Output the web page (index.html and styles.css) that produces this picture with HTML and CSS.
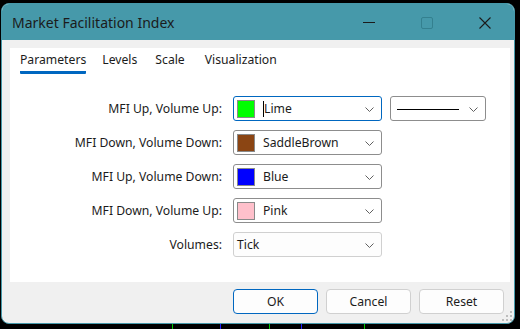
FILE: index.html
```html
<!DOCTYPE html>
<html>
<head>
<meta charset="utf-8">
<link rel="stylesheet" href="styles.css">
</head>
<body>
<div class="window">
  <div class="titlebar">
    <span class="title">Market Facilitation Index</span>
    <div class="controls">
      <div class="ctl"><svg width="12" height="12" viewBox="0 0 12 12"><line x1="0" y1="5.5" x2="12" y2="5.5" stroke="#1b1b1b" stroke-width="1"/></svg></div>
      <div class="ctl"><svg width="12" height="12" viewBox="0 0 12 12"><rect x="0.5" y="0.5" width="11" height="11" rx="1.5" fill="none" stroke="#34808f" stroke-width="1"/></svg></div>
      <div class="ctl"><svg width="12" height="12" viewBox="0 0 12 12"><path d="M0.5 0.5 L11.5 11.5 M11.5 0.5 L0.5 11.5" stroke="#1b1b1b" stroke-width="1.1" fill="none"/></svg></div>
    </div>
  </div>
  <div class="content">
    <div class="panel">
      <div class="tabs">
        <span class="tab active">Parameters</span>
        <span class="tab">Levels</span>
        <span class="tab">Scale</span>
        <span class="tab">Visualization</span>
      </div>
      <div class="form">
        <div class="row">
          <span class="label">MFI Up, Volume Up:</span>
          <div class="combo focused">
            <span class="swatch" style="background:#00ff00"></span>
            <span class="caret"></span><span class="value">Lime</span>
            <svg class="chev" width="9" height="5" viewBox="0 0 9 5"><path d="M0.5 0.5 L4.5 4.5 L8.5 0.5" fill="none" stroke="#606060" stroke-width="1"/></svg>
          </div>
          <div class="combo line-combo">
            <span class="line-sample"></span>
            <svg class="chev" width="9" height="5" viewBox="0 0 9 5"><path d="M0.5 0.5 L4.5 4.5 L8.5 0.5" fill="none" stroke="#606060" stroke-width="1"/></svg>
          </div>
        </div>
        <div class="row">
          <span class="label">MFI Down, Volume Down:</span>
          <div class="combo">
            <span class="swatch" style="background:#8b4513"></span>
            <span class="value">SaddleBrown</span>
            <svg class="chev" width="9" height="5" viewBox="0 0 9 5"><path d="M0.5 0.5 L4.5 4.5 L8.5 0.5" fill="none" stroke="#606060" stroke-width="1"/></svg>
          </div>
        </div>
        <div class="row">
          <span class="label">MFI Up, Volume Down:</span>
          <div class="combo">
            <span class="swatch" style="background:#0000ff"></span>
            <span class="value">Blue</span>
            <svg class="chev" width="9" height="5" viewBox="0 0 9 5"><path d="M0.5 0.5 L4.5 4.5 L8.5 0.5" fill="none" stroke="#606060" stroke-width="1"/></svg>
          </div>
        </div>
        <div class="row">
          <span class="label">MFI Down, Volume Up:</span>
          <div class="combo">
            <span class="swatch" style="background:#ffc0cb"></span>
            <span class="value">Pink</span>
            <svg class="chev" width="9" height="5" viewBox="0 0 9 5"><path d="M0.5 0.5 L4.5 4.5 L8.5 0.5" fill="none" stroke="#606060" stroke-width="1"/></svg>
          </div>
        </div>
        <div class="row">
          <span class="label">Volumes:</span>
          <div class="combo plain">
            <span class="value">Tick</span>
            <svg class="chev" width="9" height="5" viewBox="0 0 9 5"><path d="M0.5 0.5 L4.5 4.5 L8.5 0.5" fill="none" stroke="#606060" stroke-width="1"/></svg>
          </div>
        </div>
      </div>
    </div>
    <div class="buttons">
      <button class="btn default">OK</button>
      <button class="btn">Cancel</button>
      <button class="btn">Reset</button>
    </div>
    <svg class="grip" width="11" height="11" viewBox="0 0 11 11">
      <rect x="8" y="0" width="2" height="2" fill="#bdbdbd"/>
      <rect x="4" y="4" width="2" height="2" fill="#bdbdbd"/>
      <rect x="8" y="4" width="2" height="2" fill="#bdbdbd"/>
      <rect x="0" y="8" width="2" height="2" fill="#bdbdbd"/>
      <rect x="4" y="8" width="2" height="2" fill="#bdbdbd"/>
      <rect x="8" y="8" width="2" height="2" fill="#bdbdbd"/>
    </svg>
  </div>
</div>
<div class="chart-strip"></div>
</body>
</html>
```
FILE: styles.css
```css
* { box-sizing: border-box; }
html, body { margin: 0; padding: 0; }
body {
  background: #000;
  width: 520px;
  height: 329px;
  overflow: hidden;
  font-family: "Noto Sans", "Open Sans", sans-serif;
  font-size: 12.2px;
  color: #1b1b1b;
}
.window {
  margin: 3px 0 0 1px;
  width: 514px;
  height: 321px;
  border: 1px solid #4699aa;
  border-radius: 8px;
  overflow: hidden;
  background: #f0f0f0;
  display: flex;
  flex-direction: column;
  position: relative;
}
.titlebar {
  height: 36px;
  background: #4699aa;
  display: flex;
  align-items: center;
  justify-content: space-between;
  flex: none;
}
.title {
  font-size: 14px;
  padding-left: 10px;
  color: #1b1b1b;
}
.controls { display: flex; height: 100%; }
.ctl {
  width: 58px;
  height: 100%;
  display: flex;
  align-items: center;
  justify-content: center;
  padding-top: 1px;
}
.ctl svg { display: block; }
.content {
  flex: 1;
  padding: 8px 4px 9px 8px;
  display: flex;
  flex-direction: column;
}
.panel {
  background: #fff;
  height: 234px;
  flex: none;
}
.tabs {
  display: flex;
  padding: 4px 0 0 10px;
}
.tab {
  line-height: 16px;
  height: 22px;
  padding-bottom: 3px;
  border-bottom: 3px solid transparent;
}
.tab + .tab { margin-left: 18px; }
.tab:nth-child(2) { margin-left: 16px; }
.tab:last-child { margin-left: 20px; }
.tab.active { border-bottom-color: #0067c0; border-radius: 0 0 1px 1px; }
.form {
  margin-top: 22px;
  display: flex;
  flex-direction: column;
  gap: 9px;
}
.row {
  display: flex;
  align-items: center;
  height: 25px;
  flex: none;
}
.label {
  width: 213px;
  text-align: right;
  padding-right: 1px;
  margin-right: 10px;
  line-height: 16px;
}
.combo {
  width: 149px;
  height: 25px;
  border: 1px solid #8d8d8d;
  border-radius: 3px;
  background: #fff;
  display: flex;
  align-items: center;
  padding-left: 3px;
  position: relative;
}
.combo.focused { border-color: #0067c0; }
.combo.plain { border-color: #d0d0d0; background: #fdfdfd; }
.swatch {
  width: 18px;
  height: 18px;
  border: 1px solid #8a8a8a;
  flex: none;
  margin-right: 8px;
}
.caret {
  width: 1px;
  height: 16px;
  background: #000;
  flex: none;
}
.value { line-height: 16px; }
.chev {
  position: absolute;
  right: 7px;
  top: 10px;
}
.line-combo {
  width: 96px;
  margin-left: 8px;
  padding-left: 6px;
}
.line-sample {
  width: 62px;
  height: 1px;
  background: #000;
  margin-top: 1px;
}
.buttons {
  margin-top: 7px;
  display: flex;
  justify-content: flex-end;
  gap: 8px;
  padding-right: 6px;
}
.btn {
  width: 85px;
  height: 25px;
  border: 1px solid #d0d0d0;
  border-radius: 4px;
  background: #fdfdfd;
  font-family: inherit;
  font-size: 12.2px;
  color: #1b1b1b;
  padding: 0;
}
.btn.default { border-color: #0067c0; }
.grip {
  position: absolute;
  right: 1px;
  bottom: 1px;
}
.chart-strip {
  height: 5px;
  background:
    linear-gradient(#00c800, #00c800) 172px 0 / 1px 100% no-repeat,
    linear-gradient(#2020ff, #2020ff) 220px 0 / 1px 100% no-repeat,
    linear-gradient(#00c800, #00c800) 269px 0 / 1px 100% no-repeat,
    linear-gradient(#2020ff, #2020ff) 301px 0 / 1px 100% no-repeat,
    linear-gradient(#00c800, #00c800) 364px 0 / 1px 100% no-repeat;
}
```
